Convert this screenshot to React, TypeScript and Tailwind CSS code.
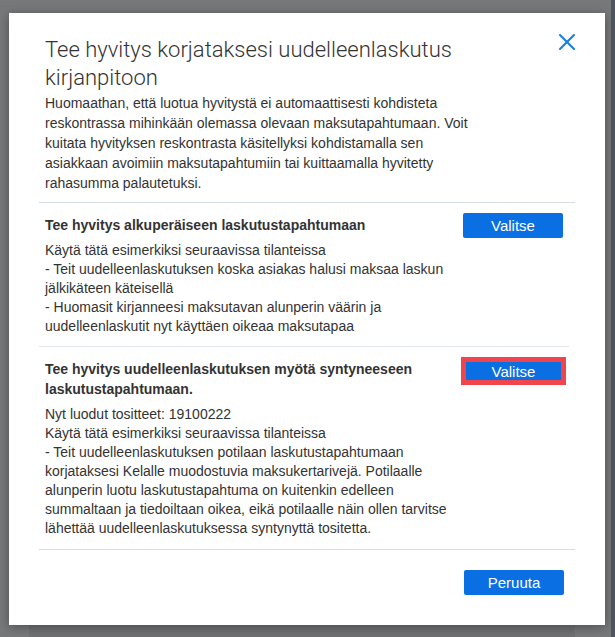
import { X } from "lucide-react"

const font = { fontFamily: '"Segoe UI", "Liberation Sans", Arial, sans-serif' }

function Btn({ label, focused = false }: { label: string; focused?: boolean }) {
  if (focused) {
    return (
      <button className="w-[105px] h-[28px] border-[5px] border-[#f0454d] bg-[#0a6fe3] text-white text-[15px] leading-none flex items-center justify-center shrink-0">
        {label}
      </button>
    )
  }
  return (
    <button className="w-[100px] h-[25px] rounded-[2px] bg-[#0a6fe3] text-white text-[15px] leading-none flex items-center justify-center shrink-0">
      {label}
    </button>
  )
}

export default function App() {
  return (
    <div className="w-[615px] h-[637px] bg-[#77787a] overflow-hidden relative" style={font}>
      {/* page behind the overlay */}
      <div className="absolute left-[29px] right-[40px] top-[625px] bottom-0 bg-[#6f7072]" />
      <div className="absolute right-0 top-0 bottom-0 w-[4px] bg-[#4e5661]" />

      <div className="relative ml-[9px] mt-[13px] w-[596px] h-[612px] bg-white shadow-[0_2px_10px_rgba(0,0,0,0.35)] pl-[30px] pr-[30px] pt-[23px] text-[#333333]">
        <button className="absolute right-[24px] top-[15px] w-[28px] h-[28px] flex items-center justify-center text-[#1a7fe0]">
          <X className="w-[28px] h-[28px]" strokeWidth={1.8} />
        </button>

        <h1
          className="pl-[6px] w-[476px] text-[22px] leading-[28px] font-light text-[#333]"
          style={{ fontFamily: 'Roboto, "Liberation Sans", sans-serif' }}
        >
          Tee hyvitys korjataksesi uudelleenlaskutus kirjanpitoon
        </h1>
        <p className="pl-[6px] mt-[1px] w-[436px] text-[14px] leading-[20px] pb-[9px]">
          Huomaathan, että luotua hyvitystä ei automaattisesti kohdisteta reskontrassa mihinkään olemassa olevaan
          maksutapahtumaan. Voit kuitata hyvityksen reskontrasta käsitellyksi kohdistamalla sen asiakkaan avoimiin
          maksutapahtumiin tai kuittaamalla hyvitetty rahasumma palautetuksi.
        </p>
        <div className="border-b border-[#d6dfe9]" />

        <section className="pl-[6px] pr-[6px] pt-[10px] pb-[10px] border-b border-[#e0e5ec] mr-[6px]">
          <div className="flex justify-between items-start">
            <h2 className="text-[14px] leading-[20px] font-bold text-[#333] pt-[2px]">
              Tee hyvitys alkuperäiseen laskutustapahtumaan
            </h2>
            <Btn label="Valitse" />
          </div>
          <div className="mt-[3px] w-[415px] text-[14px] leading-[19px]">
            <p>Käytä tätä esimerkiksi seuraavissa tilanteissa</p>
            <p>- Teit uudelleenlaskutuksen koska asiakas halusi maksaa laskun jälkikäteen käteisellä</p>
            <p>- Huomasit kirjanneesi maksutavan alunperin väärin ja uudelleenlaskutit nyt käyttäen oikeaa maksutapaa</p>
          </div>
        </section>

        <section className="pl-[6px] pr-[9px] pt-[10px] pb-[11px] border-b border-[#d6dfe9]">
          <div className="flex justify-between items-start">
            <h2 className="w-[400px] text-[14px] leading-[20px] font-bold text-[#333] pt-[2px]">
              Tee hyvitys uudelleenlaskutuksen myötä syntyneeseen laskutustapahtumaan.
            </h2>
            <Btn label="Valitse" focused />
          </div>
          <div className="mt-[6px] w-[415px] text-[14px] leading-[19px]">
            <p>Nyt luodut tositteet: 19100222</p>
            <p>Käytä tätä esimerkiksi seuraavissa tilanteissa</p>
            <p>
              - Teit uudelleenlaskutuksen potilaan laskutustapahtumaan korjataksesi Kelalle muodostuvia
              maksukertarivejä. Potilaalle alunperin luotu laskutustapahtuma on kuitenkin edelleen summaltaan ja
              tiedoiltaan oikea, eikä potilaalle näin ollen tarvitse lähettää uudelleenlaskutuksessa syntynyttä
              tositetta.
            </p>
          </div>
        </section>

        <div className="flex justify-end pt-[20px] pr-[11px]">
          <Btn label="Peruuta" />
        </div>
      </div>
    </div>
  )
}
